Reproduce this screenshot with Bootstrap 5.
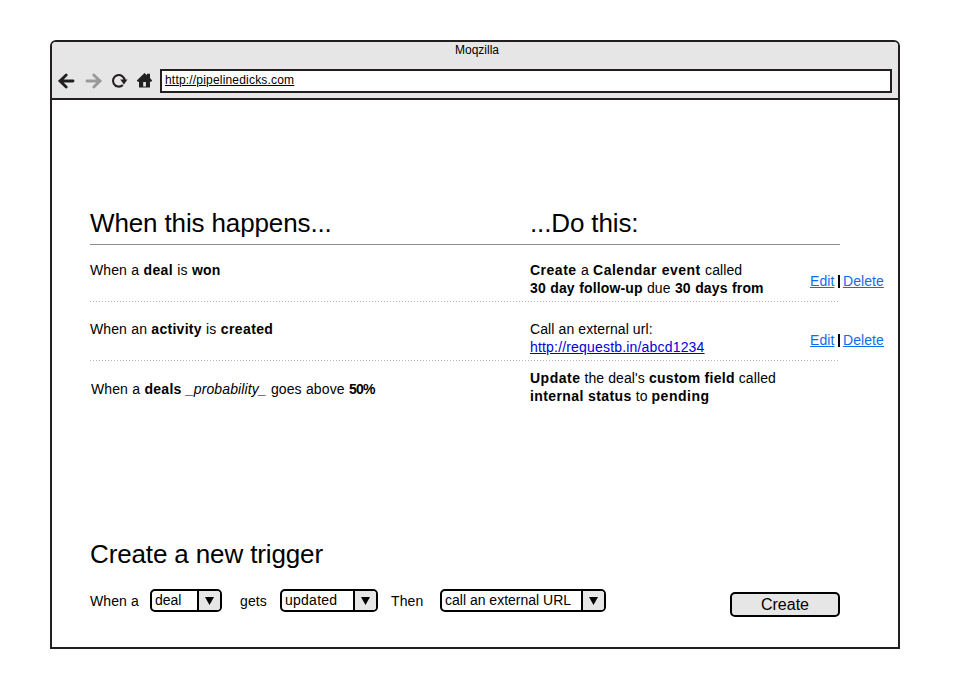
<!DOCTYPE html>
<html lang="en">
<head>
<meta charset="utf-8">
<title>Moqzilla</title>
<link href="https://cdn.jsdelivr.net/npm/bootstrap@5.3.0/dist/css/bootstrap.min.css" rel="stylesheet">
<style>
body{font-family:"Liberation Sans",Arial,sans-serif;font-size:14px;line-height:18px;color:#000;background:#fff;letter-spacing:.1px;padding:40px 0 0 50px}
.window{width:850px;height:609px;border:2px solid #231f20;border-radius:6px 6px 0 0;background:#fff}
.chrome{height:58px;background:#e6e6e6;border-bottom:2px solid #231f20;border-radius:4px 4px 0 0;font-size:12px;line-height:14px}
.win-title{padding:1px 0 0 4px;height:27px;letter-spacing:0}
.tools{padding-left:5px}
.address{width:732px;height:24px;border:2px solid #231f20;background:#fff;padding:2px 0 0 3px;letter-spacing:.19px}
.address a{color:#000}
.page{padding:108px 0 0 38px}
.trig-head{font-size:26px;line-height:30px;letter-spacing:-.13px;font-weight:400;margin:0}
.cols{display:grid;grid-template-columns:440px 280px 76px}
.rule{width:750px;height:1px;background:#8c8c8c;margin-top:6px}
.dots{width:750px;height:1px;background:repeating-linear-gradient(90deg,#b8b8b8 0 1px,transparent 1px 3px)}
.rule-row{height:56px;padding-top:16px}
.rule-row.second{height:58px;padding-top:18px}
.rule-row.third{height:178px;padding-top:8px}
.cond,.effect{word-spacing:.3px}
.third .cond{padding:11px 0 0 1px}
b{letter-spacing:.5px}
b.t4{letter-spacing:.4px}
b.t3{letter-spacing:.28px}
b.t2{letter-spacing:.15px}
b.t0{letter-spacing:-.7px}
.third .effect,.second .effect{word-spacing:0}
.acts{padding-top:11px;letter-spacing:.08px}
.acts a{color:#106bee}
.bar{width:2px;height:13px;background:#000;margin:3px 3px 0 3.5px}
.target{color:#0000dd;letter-spacing:.18px}
.maker{width:750px;margin-top:20px}
.lbl{margin-top:3px}
.lbl-when{width:60px}.lbl-gets{width:58px;padding-left:18px}.lbl-then{width:62px;padding-left:13px}
.pick{height:23px;border:2px solid #000;border-radius:5px;overflow:hidden;padding:0;background:#fff;color:#000}
.pick-text{text-align:left;padding-left:3px}
.pick-upd .pick-text{letter-spacing:.25px}
.pick-arrow{width:23px;border-left:2px solid #000;background:#e6e6e6}
.pick-deal{width:72px}.pick-upd{width:98px}.pick-url{width:166px}
.make{width:110px;height:25px;border:2px solid #000;border-radius:5px;background:#e6e6e6;font-size:16px;line-height:21px;letter-spacing:0;color:#000;margin-top:3px;padding:0}
</style>
</head>
<body>
<main class="window">
  <header class="chrome">
    <div class="win-title text-center">Moqzilla</div>
    <div class="tools d-flex">
      <svg width="27" height="24" viewBox="57 69 27 24" fill="none" stroke="#231f20" stroke-width="2.9"><path d="M73 81H60M66.200 75L60 81l6.200 6" stroke-linecap="round"/></svg>
      <svg width="27" height="24" viewBox="84 69 27 24" fill="none" stroke="#999" stroke-width="2.9"><path d="M87 81h13M93.800 75L100 81l-6.200 6" stroke-linecap="round"/></svg>
      <svg width="25" height="24" viewBox="111 69 25 24"><path d="M122.800 85A5.800 5.800 0 1 1 124.600 80.500" fill="none" stroke="#231f20" stroke-width="2.100"/><path d="M120.300 79.500h7.200l-3.600 5z" fill="#231f20"/></svg>
      <svg width="24" height="24" viewBox="136 69 24 24" fill="#231f20"><path fill-rule="evenodd" d="M144.500 73L147 75.200V73.800h3V78l2.200 2.500-1 1.300H150v5.700h-11v-5.700h-1.200l-1-1.300zM143.200 82v4.600h2.700v-4.600z"/></svg>
      <div class="address"><a href="#">http://pipelinedicks.com</a></div>
    </div>
  </header>
  <div class="page">
    <div class="cols">
      <h2 class="trig-head">When this happens...</h2>
      <h2 class="trig-head">...Do this:</h2>
    </div>
    <div class="rule"></div>
    <div class="cols rule-row">
      <div class="cond">When a <b class="t4">deal</b> is <b class="t2">won</b></div>
      <div class="effect"><b>Create</b> a <b>Calendar event</b> called<br><b class="t2">30 day follow-up</b> due <b class="t2">30 days from</b></div>
      <div class="acts d-flex"><a href="#">Edit</a><span class="bar"></span><a href="#">Delete</a></div>
    </div>
    <div class="dots"></div>
    <div class="cols rule-row second">
      <div class="cond">When an <b class="t3">activity</b> is <b class="t4">created</b></div>
      <div class="effect">Call an external url:<br><a href="#" class="target">http://requestb.in/abcd1234</a></div>
      <div class="acts d-flex"><a href="#">Edit</a><span class="bar"></span><a href="#">Delete</a></div>
    </div>
    <div class="dots"></div>
    <div class="cols rule-row third">
      <div class="cond">When a <b class="t3">deals</b> <i>_probability_</i> goes above <b class="t0">50%</b></div>
      <div class="effect"><b>Update</b> the deal's <b class="t3">custom field</b> called<br><b class="t4">internal status</b> to <b>pending</b></div>
    </div>
    <h2 class="trig-head">Create a new trigger</h2>
    <div class="maker d-flex align-items-start">
      <span class="lbl lbl-when">When a</span>
      <button type="button" class="pick pick-deal d-flex"><span class="pick-text flex-grow-1">deal</span><span class="pick-arrow align-self-stretch"><svg class="d-block" width="21" height="19"><path d="M6 6h9l-4.500 8z"/></svg></span></button>
      <span class="lbl lbl-gets">gets</span>
      <button type="button" class="pick pick-upd d-flex"><span class="pick-text flex-grow-1">updated</span><span class="pick-arrow align-self-stretch"><svg class="d-block" width="21" height="19"><path d="M6 6h9l-4.500 8z"/></svg></span></button>
      <span class="lbl lbl-then">Then</span>
      <button type="button" class="pick pick-url d-flex"><span class="pick-text flex-grow-1">call an external URL</span><span class="pick-arrow align-self-stretch"><svg class="d-block" width="21" height="19"><path d="M6 6h9l-4.500 8z"/></svg></span></button>
      <button type="button" class="make ms-auto">Create</button>
    </div>
  </div>
</main>
<script src="https://cdn.jsdelivr.net/npm/bootstrap@5.3.0/dist/js/bootstrap.bundle.min.js"></script>
</body>
</html>
